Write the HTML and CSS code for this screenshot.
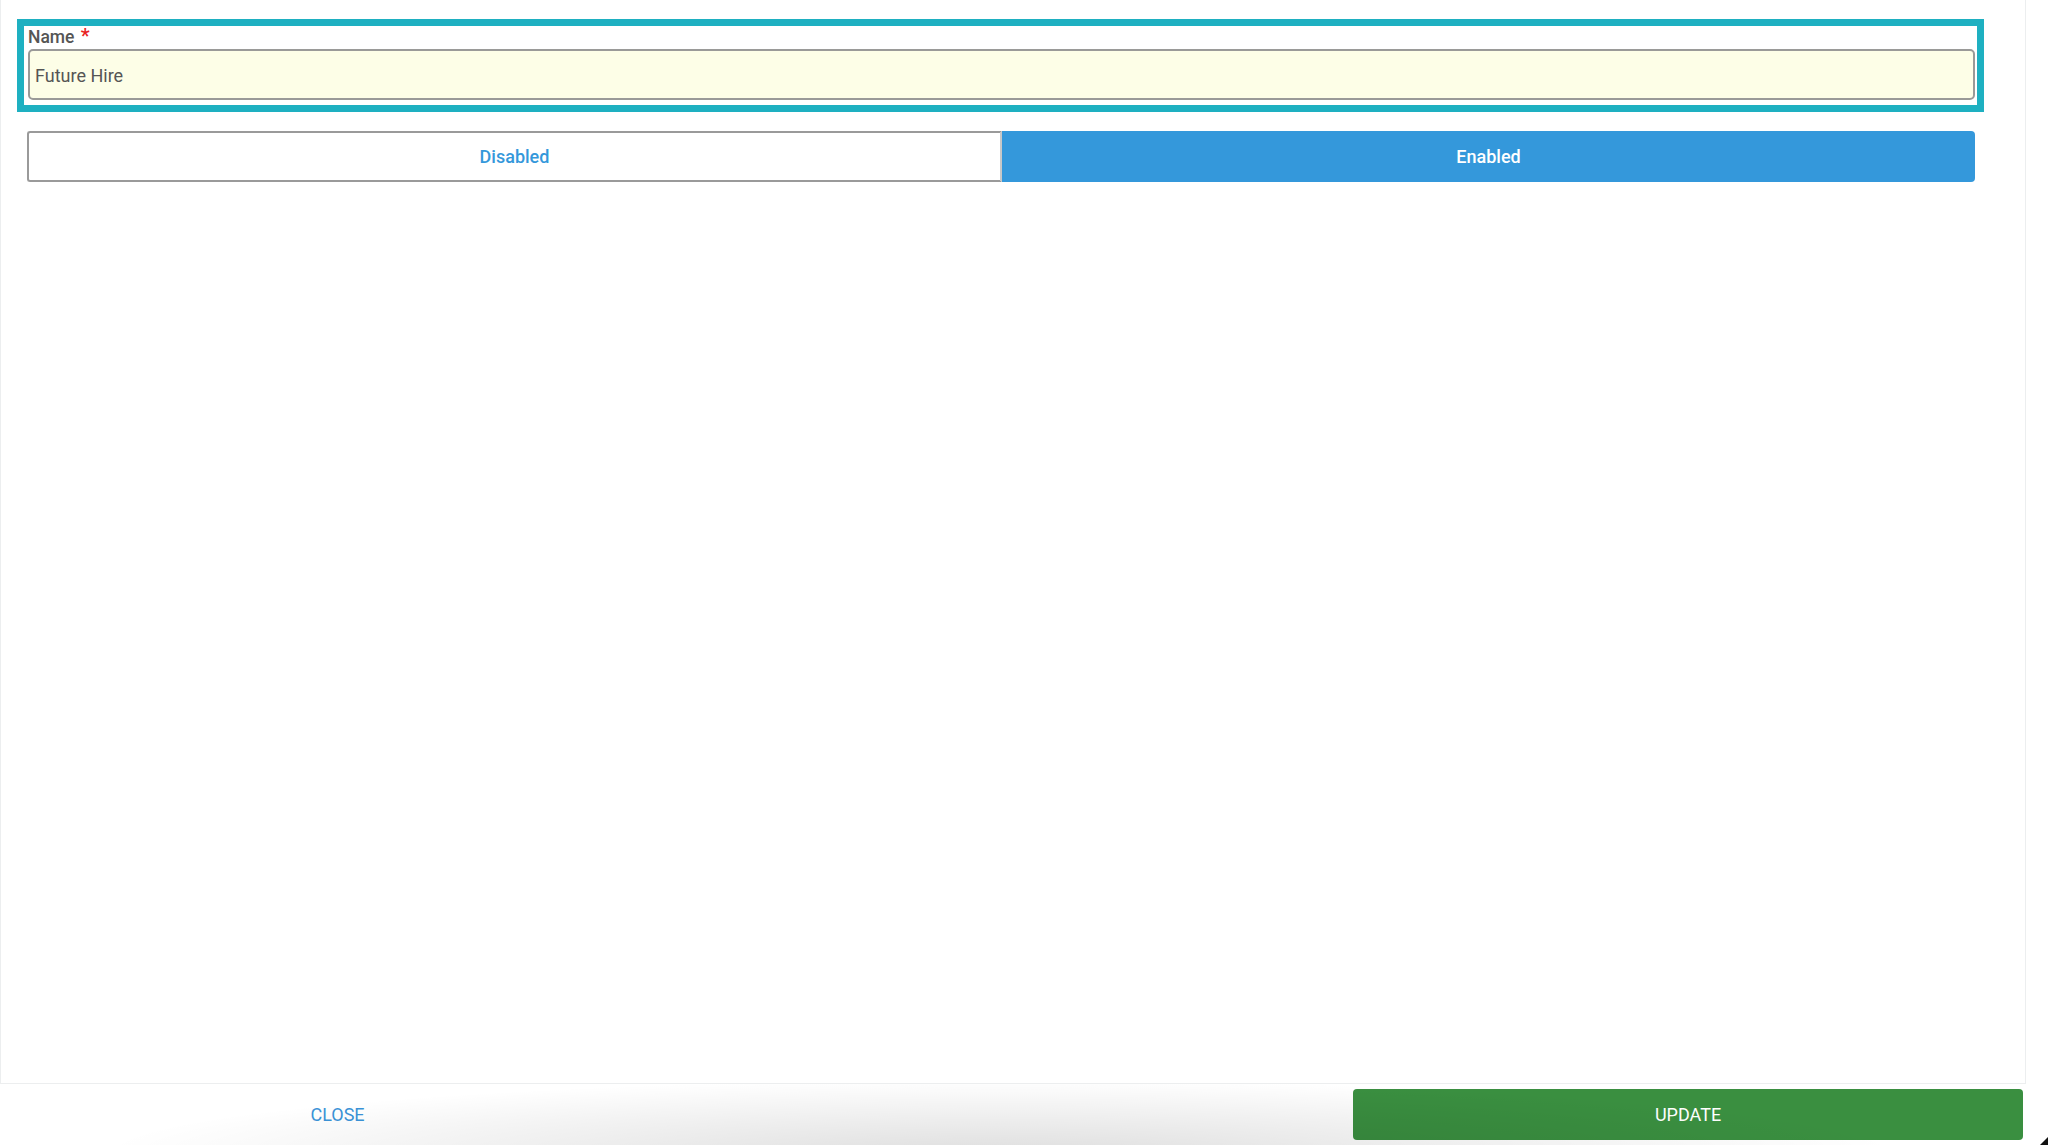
FILE: index.html
```html
<!DOCTYPE html>
<html>
<head>
<meta charset="utf-8">
<link rel="stylesheet" href="styles.css">
</head>
<body>
<div class="page">
  <div class="panel">
    <div class="group">
      <div class="label">Name <span class="req">*</span></div>
      <div class="input">Future Hire</div>
    </div>
    <div class="toggle">
      <div class="opt off">Disabled</div>
      <div class="opt on">Enabled</div>
    </div>
  </div>
  <div class="footer">
    <div class="close">CLOSE</div>
    <div class="spacer"></div>
    <div class="update">UPDATE</div>
    <div class="shade"></div>
    <svg class="corner" width="8" height="8" viewBox="0 0 8 8"><polygon points="8,0 8,8 0,8" fill="#111"/></svg>
  </div>
</div>
</body>
</html>
```

FILE: styles.css
```css
html, body {
  margin: 0;
  padding: 0;
  background: #ffffff;
}
.page {
  width: 2048px;
  height: 1145px;
  position: relative;
  overflow: hidden;
  display: flex;
  flex-direction: column;
}
.panel {
  width: 2026px;
  height: 1084px;
  box-sizing: border-box;
  border: 1px solid #eceeef;
  border-top: none;
  padding: 19px 0 0 16px;
}
.group {
  width: 1967px;
  height: 93px;
  box-sizing: border-box;
  border: 7px solid #1eb0c1;
  padding: 0 2px 0 4px;
  background: #fff;
}
.label {
  font-family: Roboto, "Noto Sans", sans-serif;
  font-weight: 500;
  font-size: 17.5px;
  color: #555;
  line-height: 20px;
  height: 23px;
}
.req {
  color: #e8221f;
  font-size: 20px;
  margin-left: 2px;
}
.input {
  height: 51px;
  box-sizing: border-box;
  border: 2px solid #9a9a98;
  border-radius: 5px;
  background: #fdfee7;
  font-family: Roboto, "Noto Sans", sans-serif;
  font-size: 18px;
  color: #555;
  display: flex;
  align-items: center;
  padding-left: 5px;
  padding-top: 1px;
}
.toggle {
  margin: 19px 0 0 10px;
  width: 1948px;
  height: 51px;
  display: flex;
}
.opt {
  display: flex;
  align-items: center;
  justify-content: center;
  font-family: Roboto, "Noto Sans", sans-serif;
  font-weight: 500;
  font-size: 18px;
  box-sizing: border-box;
}
.off {
  width: 975px;
  border: 2px solid #9a9a9a;
  border-right: 2px solid #c8c8c8;
  border-radius: 3px 0 0 3px;
  color: #3498db;
  background: #fff;
}
.on {
  flex: 1;
  background: #3498db;
  color: #fff;
  border-radius: 0 4px 4px 0;
  padding-bottom: 1px;
}
.footer {
  flex: 1;
  position: relative;
  display: grid;
  grid-template-columns: 675px 678px 670px;
  align-items: start;
  background: #fff;
}
.close {
  height: 61px;
  display: flex;
  align-items: center;
  justify-content: center;
  font-family: Roboto, "Noto Sans", sans-serif;
  font-size: 18px;
  color: #3a93d8;
}
.update {
  margin-top: 5px;
  height: 51px;
  border-radius: 4px;
  background: #3a8f40;
  color: #fff;
  display: flex;
  align-items: center;
  justify-content: center;
  font-family: Roboto, "Noto Sans", sans-serif;
  font-size: 18px;
}
.shade {
  position: absolute;
  left: 0;
  top: 0;
  right: 0;
  bottom: 0;
  pointer-events: none;
  background: radial-gradient(ellipse 900px 75px at 1000px 115%, rgba(0,0,0,0.13), rgba(0,0,0,0.04) 70%, rgba(0,0,0,0) 100%);
}
.corner {
  position: absolute;
  right: 0;
  bottom: 0;
}
```
